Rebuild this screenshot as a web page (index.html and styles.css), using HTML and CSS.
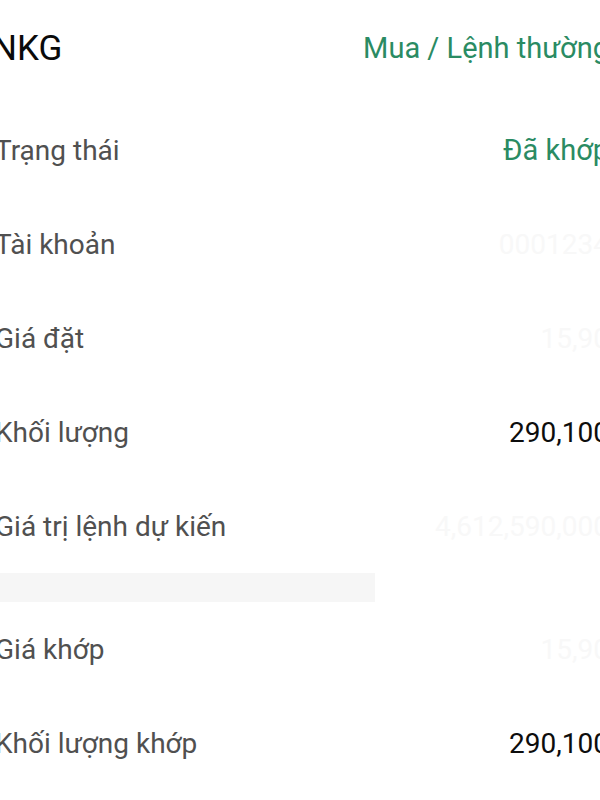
FILE: index.html
```html
<!DOCTYPE html>
<html lang="vi">
<head>
<meta charset="utf-8">
<link rel="stylesheet" href="styles.css">
</head>
<body>
<div class="page">
  <header class="head">
    <span class="symbol">NKG</span>
    <span class="side">Mua / Lệnh thường</span>
  </header>
  <section class="list">
    <div class="row"><span class="label">Trạng thái</span><span class="value green">Đã khớp</span></div>
    <div class="row"><span class="label">Tài khoản</span><span class="value hidden">0001234</span></div>
    <div class="row"><span class="label">Giá đặt</span><span class="value hidden">15,90</span></div>
    <div class="row"><span class="label">Khối lượng</span><span class="value">290,100</span></div>
    <div class="row"><span class="label">Giá trị lệnh dự kiến</span><span class="value hidden">4,612,590,000</span></div>
  </section>
  <div class="divider"></div>
  <section class="list">
    <div class="row"><span class="label">Giá khớp</span><span class="value hidden">15,90</span></div>
    <div class="row"><span class="label">Khối lượng khớp</span><span class="value">290,100</span></div>
  </section>
</div>
</body>
</html>
```
FILE: styles.css
```css
html, body {
  margin: 0;
  padding: 0;
  background: #ffffff;
  overflow: hidden;
}
.page {
  width: 614px;
  margin-left: -5px;
  font-family: Roboto, "Liberation Sans", sans-serif;
}
.head {
  height: 96px;
  display: flex;
  align-items: center;
  justify-content: space-between;
}
.symbol {
  font-size: 35px;
  color: #0a0a0a;
  margin-left: -3px;
}
.side {
  font-size: 29px;
  color: #2a8b63;
}
.list {
  display: flex;
  flex-direction: column;
}
.list:first-of-type {
  padding-top: 7px;
}
.row {
  height: 94px;
  display: flex;
  align-items: center;
  justify-content: space-between;
}
.label {
  font-size: 28px;
  color: #505050;
}
.value {
  font-size: 28px;
  color: #0d0d0d;
}
.value.green {
  color: #2a8b63;
  font-size: 29px;
}
.value.hidden {
  color: #f8f8f8;
}
.divider {
  width: 380px;
  height: 29px;
  background: #f6f6f6;
}
```
